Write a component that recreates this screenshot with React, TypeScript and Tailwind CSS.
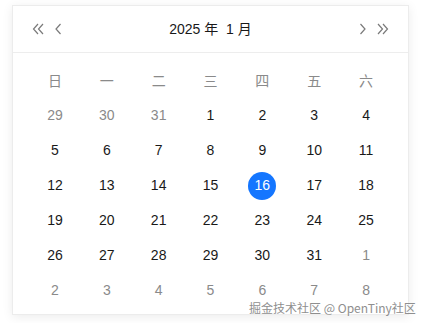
import React from "react";

const weekdays = ["日", "一", "二", "三", "四", "五", "六"];

type Day = { n: number; cur: boolean };

function buildDays(): Day[] {
  const days: Day[] = [];
  [29, 30, 31].forEach((n) => days.push({ n, cur: false }));
  for (let i = 1; i <= 31; i++) days.push({ n: i, cur: true });
  for (let i = 1; days.length < 42; i++) days.push({ n: i, cur: false });
  return days;
}

function DoubleLeft() {
  return (
    <svg width="14" height="14" viewBox="0 0 14 14" fill="none" stroke="#7a7a7a" strokeWidth="1.2">
      <path d="M7 2 L2.5 7 L7 12" />
      <path d="M12 2 L7.5 7 L12 12" />
    </svg>
  );
}

function SingleLeft() {
  return (
    <svg width="10" height="14" viewBox="0 0 10 14" fill="none" stroke="#7a7a7a" strokeWidth="1.2">
      <path d="M7.5 2 L3 7 L7.5 12" />
    </svg>
  );
}

export default function App() {
  const days = buildDays();

  return (
    <div className="relative w-[423px] h-[323px] bg-white pt-[5px] pl-[12px] font-['Liberation_Sans','Noto_Sans_CJK_SC',sans-serif]">
      <div className="w-[397px] h-[310px] bg-white border border-[#ececec] shadow-[0_2px_10px_rgba(0,0,0,0.08)]">
        {/* header */}
        <div className="h-[47px] flex items-center justify-between px-[18px] border-b border-[#ededed]">
          <div className="flex items-center gap-[8px]">
            <DoubleLeft />
            <SingleLeft />
          </div>
          <div className="text-[14px] text-[#191919] whitespace-pre">2025 年  1 月</div>
          <div className="flex items-center gap-[8px]">
            <span className="scale-x-[-1] flex"><SingleLeft /></span>
            <span className="scale-x-[-1] flex"><DoubleLeft /></span>
          </div>
        </div>

        {/* body */}
        <div className="px-[16px] pt-[12px]">
          <div className="grid grid-cols-7">
            {weekdays.map((w) => (
              <div key={w} className="h-[33px] flex items-center justify-center text-[14px] text-[#8a8a8a]">
                {w}
              </div>
            ))}
          </div>
          <div className="grid grid-cols-7">
            {days.map((d, i) => {
              const sel = d.cur && d.n === 16;
              return (
                <div key={i} className="h-[35px] flex items-center justify-center">
                  <span
                    className={
                      sel
                        ? "w-[28px] h-[28px] rounded-full bg-[#1476ff] text-white flex items-center justify-center text-[14px]"
                        : d.cur
                        ? "text-[14px] text-[#191919]"
                        : "text-[14px] text-[#8a8a8a]"
                    }
                  >
                    {d.n}
                  </span>
                </div>
              );
            })}
          </div>
        </div>
      </div>

      {/* watermark */}
      <div className="absolute left-[249px] top-[300px] text-[12px] leading-[15px] text-[#8f8f8f] font-['Noto_Sans_CJK_SC',sans-serif] whitespace-nowrap [text-shadow:0_0_2px_#fff]">
        掘金技术社区 @ OpenTiny社区
      </div>
    </div>
  );
}
